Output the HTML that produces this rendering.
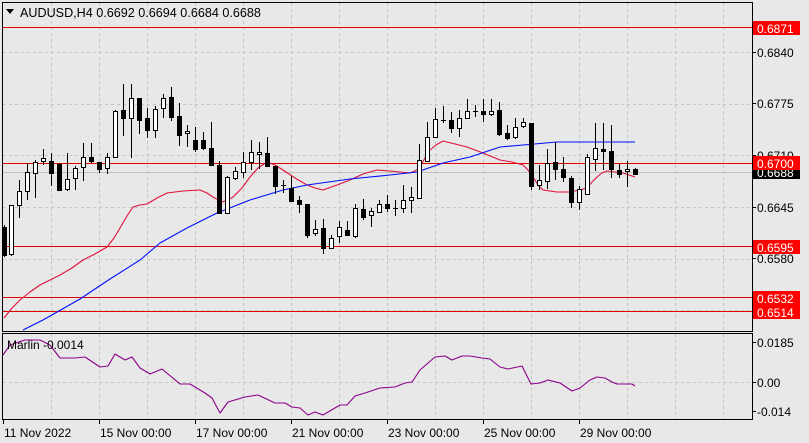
<!DOCTYPE html>
<html><head><meta charset="utf-8"><style>
html,body{margin:0;padding:0;background:#e8e8e8;}
body{width:809px;height:443px;overflow:hidden;position:relative;font-family:"Liberation Sans",sans-serif;}
svg{position:absolute;left:0;top:0;}
</style></head><body>
<svg id="s" width="809" height="443" xmlns="http://www.w3.org/2000/svg" font-family="Liberation Sans, sans-serif" font-size="12">
<rect width="809" height="443" fill="#e8e8e8"/>
<g id="grid" stroke="#c4c4c4" stroke-dasharray="3,3" stroke-width="1"></g>
<g id="lv"></g>
<g id="ma"></g>
<g id="cd"></g>
<g id="ax"></g>
<rect x="2.5" y="2.5" width="750" height="329" fill="none" stroke="#000"/>
<rect x="2.5" y="333.5" width="750" height="86" fill="none" stroke="#000"/>
<polygon points="6,9 14,9 10,14" fill="#000"/>
<text x="20" y="17" fill="#000" font-size="12.6">AUDUSD,H4  0.6692 0.6694 0.6684 0.6688</text>
<text x="7" y="349" fill="#000">Marlin -0.0014</text>
</svg>
<script>
var NS="http://www.w3.org/2000/svg";
function el(p,t,a,txt){var e=document.createElementNS(NS,t);for(var k in a)e.setAttribute(k,a[k]);if(txt!=null)e.textContent=txt;document.getElementById(p).appendChild(e);return e;}
for(var x=51;x<752;x+=48){el('grid','line',{x1:x+.5,y1:3,x2:x+.5,y2:331});el('grid','line',{x1:x+.5,y1:334,x2:x+.5,y2:419});}
[52,103.5,155,207,258.5,310].forEach(function(y){el('grid','line',{x1:3,y1:Math.round(y)+.5,x2:752,y2:Math.round(y)+.5});});
el('grid','line',{x1:3,y1:382.5,x2:752,y2:382.5});
el('lv','line',{x1:3,y1:172.5,x2:752,y2:172.5,stroke:'#c0c0c0'});
[27,163,246,297,311].forEach(function(y){el('lv','line',{x1:3,y1:y+.5,x2:752,y2:y+.5,stroke:'#e00000','stroke-width':1,'shape-rendering':'crispEdges'});});
function pl(pts,c){el('ma','polyline',{points:pts.map(function(p){return p.join(',')}).join(' '),fill:'none',stroke:c,'stroke-width':1.1,'stroke-linejoin':'round'});}
pl([[4,318],[12,308],[20,300],[30,292],[40,285],[50,280],[60,275],[72,268],[83,260],[95,254],[107,247],[114,238],[120,228],[127,216],[133,207],[140,205],[147,204],[157,198],[167,193],[183,191],[200,190],[207,193],[213,197],[222,202],[228,200],[233,197],[242,188],[250,177],[258,168],[267,162],[275,165],[283,170],[295,178],[307,185],[315,188],[323,190],[337,185],[350,180],[363,174],[377,170],[390,171],[410,173],[415,171],[420,167],[425,158],[430,150],[436,145],[443,141],[455,144],[467,147],[483,153],[500,160],[512,162],[523,165],[528,170],[533,177],[538,185],[543,190],[557,192],[570,192],[580,190],[587,188],[592,182],[597,177],[602,173],[607,171],[623,173],[635,177]],'#e0103a');
pl([[23,330],[43,320],[80,299],[110,279],[140,260],[160,243],[187,228],[217,213],[250,200],[283,190],[307,185],[350,179],[390,175],[417,172],[443,163],[470,157],[500,147],[523,145],[557,142],[590,142],[635,142]],'#0010ff');
pl([[3,355],[10,345],[25,340],[40,340],[50,345],[60,358],[75,358],[85,357],[100,367],[108,366],[115,354],[125,360],[132,357],[140,368],[150,374],[162,369],[180,384],[190,384],[205,393],[212,398],[220,413],[228,402],[245,397],[258,395],[275,403],[285,403],[292,407],[300,408],[308,415],[315,412],[323,415],[340,405],[347,405],[355,396],[365,393],[380,388],[395,387],[405,383],[412,382],[420,370],[435,357],[445,356],[452,360],[462,356],[470,356],[482,358],[490,359],[500,367],[508,369],[522,366],[531,384],[540,383],[548,380],[560,383],[572,391],[580,388],[590,380],[597,377],[605,378],[612,382],[617,384],[625,384],[632,384],[635,386]],'#8b008b');
var C=[[4,227,255,225,257],[11,254,205,205,256],[19,205,191,180,218],[27,191,172,163,200],[35,173,162,160,198],[43,161,158,149,165],[51,161,173,153,186],[59,164,190,163,191],[67,189,179,153,191],[75,178,168,166,190],[83,167,157,143,181],[91,157,161,143,163],[99,162,169,162,173],[107,168,157,153,174],[115,157,111,110,158],[123,110,118,84,136],[131,118,98,84,158],[139,98,120,98,134],[147,118,130,108,138],[155,130,109,106,138],[163,108,98,94,118],[171,97,117,87,121],[179,116,135,103,146],[187,133,131,125,147],[195,140,149,127,152],[203,140,148,132,150],[211,148,165,122,166],[219,165,213,161,214],[227,213,177,176,214],[235,178,171,167,180],[243,172,162,152,178],[251,162,152,140,170],[259,154,152,142,169],[267,153,166,137,167],[275,166,186,166,194],[283,185,185,180,193],[291,188,201,176,202],[299,200,204,196,213],[307,204,235,204,238],[315,233,229,220,236],[323,228,248,219,254],[331,248,238,235,249],[339,236,227,221,243],[347,230,235,221,236],[355,236,208,204,238],[363,209,217,199,220],[371,215,211,208,227],[379,212,204,200,213],[387,204,208,195,212],[395,208,208,200,216],[403,208,200,185,213],[411,200,197,187,213],[419,198,160,144,199],[427,161,137,122,161],[435,137,119,108,135],[443,120,120,106,123],[451,120,128,112,133],[459,128,118,110,137],[467,118,111,99,118],[475,111,111,105,117],[483,111,114,99,122],[491,114,111,99,116],[499,110,134,102,136],[507,133,138,125,140],[515,137,127,118,139],[523,126,122,118,128],[531,123,186,123,190],[539,185,180,165,190],[547,181,163,149,189],[555,162,169,142,180],[563,169,177,157,182],[571,178,202,176,208],[579,202,189,186,210],[587,194,157,154,194],[595,159,148,123,171],[603,149,151,123,170],[611,151,169,125,178],[619,170,174,164,178],[627,171,169,161,187],[635,169,174,168,175]];
C.forEach(function(c){var x=c[0],o=c[1],cl=c[2],h=c[3],l=c[4];var top=Math.min(o,cl),bot=Math.max(o,cl);
el('cd','line',{x1:x+.5,y1:h,x2:x+.5,y2:l,stroke:'#000'});
if(bot-top<1){el('cd','line',{x1:x-2,y1:top+.5,x2:x+3,y2:top+.5,stroke:'#000'});}
else{var bear=cl>o;el('cd','rect',{x:x-1.5,y:top+.5,width:4,height:bot-top,fill:bear?'#000':'#fff',stroke:'#000'});}});
function lab(y,t,bg,fg){if(bg)el('ax','rect',{x:753,y:y-7,width:47,height:14,fill:bg});el('ax','text',{x:757,y:y+5,fill:fg||'#000'},t);}
[[52,'0.6840'],[103,'0.6775'],[155,'0.6710'],[207,'0.6645'],[258,'0.6580']].forEach(function(a){el('ax','line',{x1:752,y1:a[0]+.5,x2:756,y2:a[0]+.5,stroke:'#000'});lab(a[0],a[1]);});
lab(172,'0.6688','#000','#fff');
[[28,'0.6871'],[163,'0.6700'],[247,'0.6595'],[298,'0.6532'],[312,'0.6514']].forEach(function(a){lab(a[0],a[1],'#ff0000','#fff');});
[[342,'0.0185'],[382,'0.00'],[411,'-0.014']].forEach(function(a){el('ax','line',{x1:752,y1:a[0]+.5,x2:756,y2:a[0]+.5,stroke:'#000'});el('ax','text',{x:757,y:a[0]+5,fill:'#000'},a[1]);});
[[3,'11 Nov 2022'],[99,'15 Nov 00:00'],[195,'17 Nov 00:00'],[291,'21 Nov 00:00'],[387,'23 Nov 00:00'],[483,'25 Nov 00:00'],[579,'29 Nov 00:00']].forEach(function(a){el('ax','line',{x1:a[0]+.5,y1:419,x2:a[0]+.5,y2:424,stroke:'#000'});el('ax','text',{x:a[0]+1,y:437,fill:'#000'},a[1]);});
</script>
</body></html>
